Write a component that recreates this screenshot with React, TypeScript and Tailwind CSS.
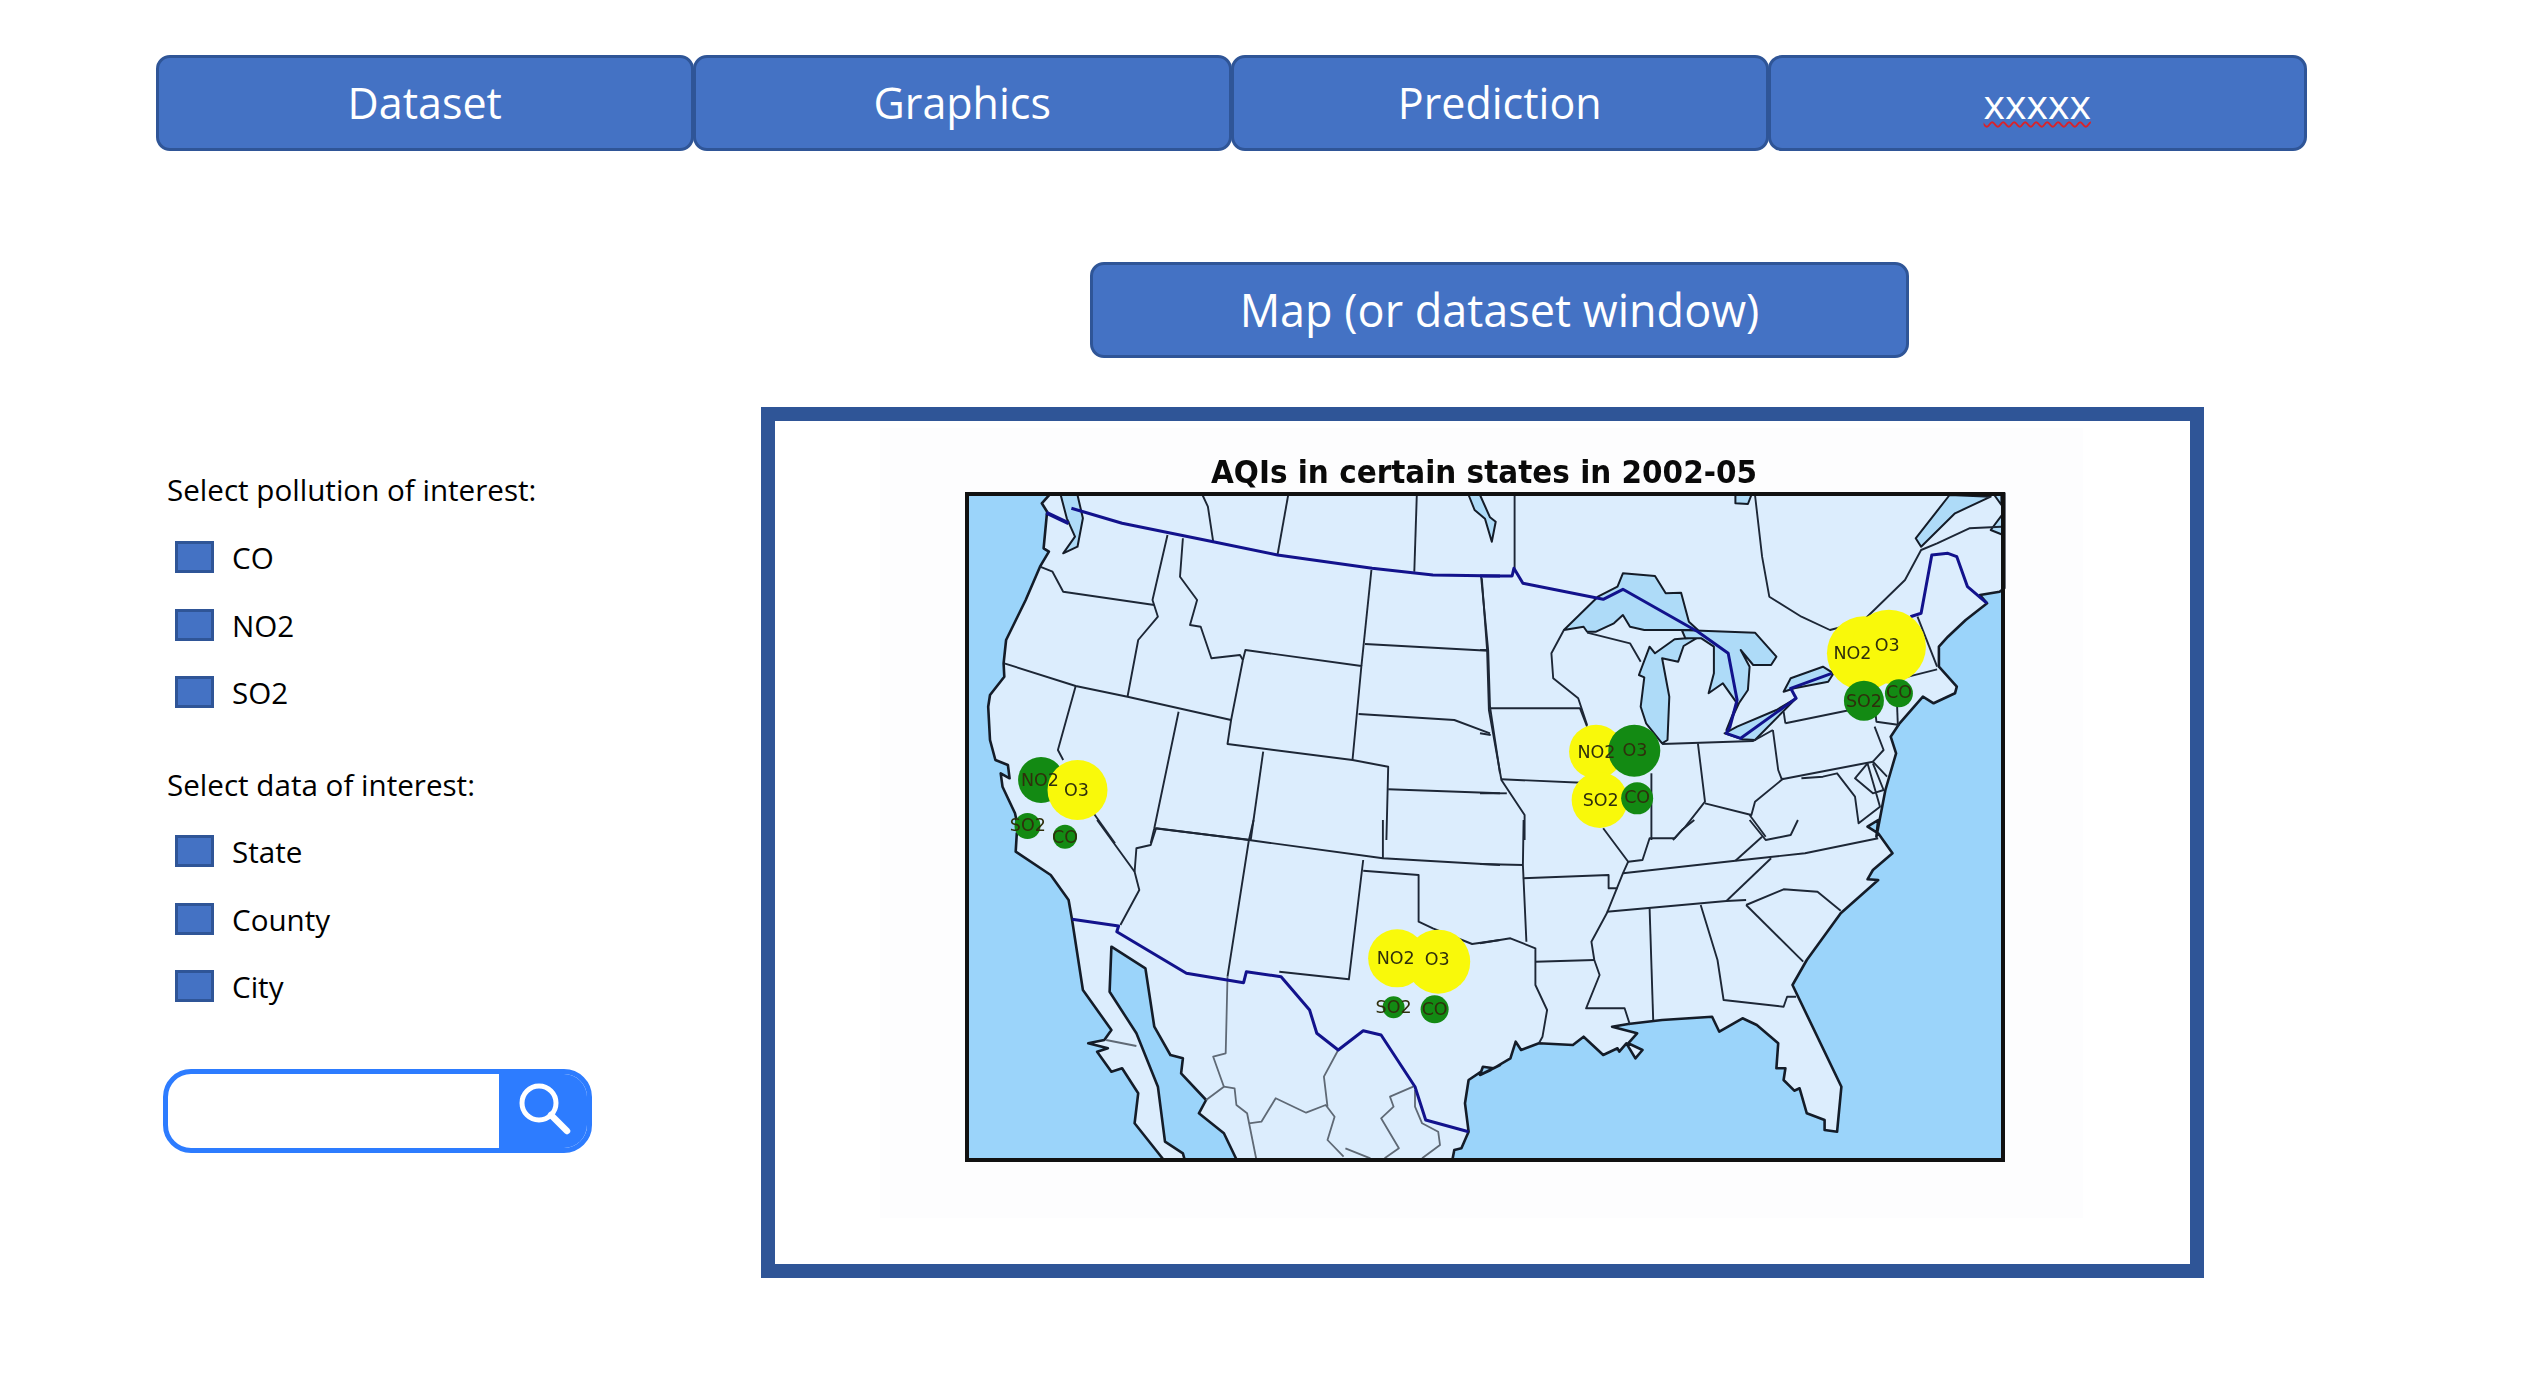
import React from "react";

const ORIGIN: Record<number, [number, number]> = { 1: [940, 440], 2: [1480, 440], 3: [940, 820], 4: [1480, 820] };
const pt = (q: number, s: string) =>
  s
    .trim()
    .split(/\s+/)
    .map((p) => {
      const [x, y] = p.split(",").map(Number);
      return `${(ORIGIN[q][0] + x / 2.8).toFixed(1)},${(ORIGIN[q][1] + y / 3).toFixed(1)}`;
    })
    .join(" ");

const LAND = [
  pt(1, "310,160 285,190 300,215 290,325 305,335 280,380 240,480 185,600 178,670 180,710 140,765 135,800 140,900 155,960 190,975 195,1015 170,1000 175,1040 210,1120 222,1180"),
  pt(3, "215,40 212,95 310,165 360,240 370,300 400,510 480,630 460,660 415,670 470,685 440,695 480,755 510,745 555,820 545,910 625,1018 685,1018 680,1000 630,965 610,800 550,640 475,515 480,380 575,445 600,620 645,705 680,715 675,760 745,840 725,880 795,940 830,1018 1435,1018 1440,990 1460,985 1480,935 1470,850 1480,780 1515,755 1520,740 1550,745 1568,735"),
  pt(4, "0,765 30,750 85,715 100,665 115,690 165,670 260,675 290,650 345,705 385,685 390,695 410,670 435,715 455,690 415,670 440,640 370,620 415,612 510,600 650,590 670,635 735,595 775,615 835,670 830,745 855,745 850,780 880,812 895,805 915,880 965,900 965,930 1000,935 1012,800 875,495 915,420 1010,280 1115,180 1085,178 1100,150 1155,100 1115,40 1085,20 1115,0"),
  pt(2, "1110,1190 1135,1050 1165,940 1150,890 1175,850 1240,770 1270,790 1330,760 1335,740 1285,680 1285,620 1310,590 1360,540 1420,490 1400,465 1455,455 1468,445 1468,160"),
].join(" ");

const WATER: [number, string][] = [
  [1, "338,165 385,165 400,235 385,320 345,340 378,290 355,235"],
  [1, "1480,165 1512,165 1540,232 1556,245 1545,305 1526,236 1497,210"],
  [2, "235,570 330,470 385,440 400,400 490,408 520,460 563,458 585,545 610,570 460,570 420,560 400,525 375,550 325,575 300,575 290,560"],
  [2, "445,705 475,620 490,640 545,598 610,592 570,618 555,665 510,655 530,770 525,900 510,910 465,850 450,800 460,712"],
  [2, "565,570 770,578 830,650 815,675 765,675 730,630 755,680 750,750 725,790 690,870 720,790 680,730 640,760 655,700 655,620 620,595 575,595"],
  [2, "685,880 735,898 770,900 885,775 830,810 720,860"],
  [2, "850,755 870,715 960,680 990,700 975,725 880,745"],
  [2, "1315,165 1220,295 1235,320 1330,220 1430,170"],
  [2, "1440,165 1460,165 1460,195"],
  [2, "1430,270 1465,220 1465,285"],
  [2, "715,165 760,165 750,192 715,190"],
];

const BORDERS: [number, string][] = [
  [1, "280,380 315,395 345,455 600,495"],
  [1, "637,285 595,480 610,530 555,600 525,770"],
  [1, "680,295 672,410 720,480 700,555 730,560 760,655 840,645 848,660"],
  [1, "180,670 380,738 525,770 815,840"],
  [1, "380,738 330,930 345,960"],
  [1, "430,1120 490,1210"],
  [1, "668,815 600,1165 590,1210"],
  [1, "848,660 855,630 1180,678 1155,960"],
  [1, "848,660 815,840 805,912 1155,960 1255,980 1250,1200"],
  [1, "1208,390 1180,678"],
  [1, "1190,612 1535,632"],
  [1, "1172,822 1440,840 1540,880"],
  [1, "1515,410 1535,632 1540,800 1568,1000"],
  [1, "905,935 870,1200"],
  [1, "1255,1048 1568,1060"],
  [1, "735,165 750,200 765,305"],
  [1, "975,165 945,345"],
  [1, "1335,165 1328,395"],
  [1, "600,1165 870,1200"],
  [3, "440,0 545,155 558,210 505,315"],
  [3, "605,25 590,75 550,85 545,155"],
  [3, "605,25 865,60 1240,115 1568,135"],
  [3, "878,0 865,60 805,470"],
  [3, "1185,120 1145,478 950,455"],
  [3, "1185,152 1340,165 1340,305 1380,325 1490,372 1568,360"],
  [3, "1240,0 1240,115"],
  [4, "0,370 85,355 155,385 155,495 188,570 175,650 165,670"],
  [4, "122,0 120,135 130,365"],
  [4, "0,132 120,135"],
  [4, "120,175 360,165 360,205 385,205"],
  [4, "155,425 320,420"],
  [4, "415,125 400,160 355,280 312,365 320,420 335,465 297,565 405,565 420,615"],
  [4, "475,265 485,600"],
  [4, "618,255 665,420 682,540 850,560 860,530 885,530"],
  [4, "355,275 690,243 745,240"],
  [4, "400,160 715,122 910,100 1115,55"],
  [4, "745,255 850,208 945,215 1010,272"],
  [4, "745,255 905,425"],
  [4, "690,243 815,115"],
  [4, "345,25 415,125 455,120 475,55 545,55 565,30 600,0"],
  [4, "715,122 790,50"],
  [4, "755,0 800,60 870,45 890,0"],
  [2, "97,165 97,390"],
  [2, "5,415 20,630 25,810 60,1020 125,1125 125,1200"],
  [2, "0,630 25,630"],
  [2, "25,805 280,805 300,860"],
  [2, "235,570 200,640 205,715 275,775 300,855"],
  [2, "300,578 420,610 450,665"],
  [2, "60,1018 285,1028"],
  [2, "0,880 30,885"],
  [2, "0,1060 75,1060"],
  [2, "480,1000 480,1200"],
  [2, "510,912 765,903 820,870"],
  [2, "610,910 630,1085 575,1160 540,1200"],
  [2, "630,1090 760,1125 770,1085 850,1015"],
  [2, "820,870 835,990 845,1018 1100,965"],
  [2, "855,850 1105,795 1110,845 1175,855"],
  [2, "1105,860 1130,930 1100,965 1140,1010"],
  [2, "855,850 850,815"],
  [2, "1165,720 1170,860"],
  [2, "1225,530 1280,680"],
  [2, "1180,715 1280,688"],
  [2, "770,165 790,350 810,470 900,530 980,570 1070,545 1190,420 1235,330 1280,310 1370,265 1460,260"],
  [2, "755,1125 800,1190"],
  [2, "900,1015 960,1010 1000,1000 1050,1070 1060,1150 1120,1100 1085,970 1050,1015 1100,1060 1130,1050 1100,970"],
];

const GREY: [number, string][] = [
  [3, "805,470 800,700 765,710 795,800"],
  [3, "465,660 550,678"],
  [3, "745,840 795,800 825,805 830,855 860,880 885,1015"],
  [3, "865,910 900,905 940,835 1025,878 1080,855 1105,890 1085,960 1130,1010"],
  [3, "1115,690 1075,770 1085,860"],
  [3, "1325,800 1260,830 1270,860 1235,895 1285,985 1245,1015"],
  [3, "1330,810 1330,860 1350,910 1395,935 1400,975 1350,1015"],
  [3, "1135,985 1205,1015"],
];

const BLUE: [number, string, number][] = [
  [1, "298,218 360,250", 4],
  [1, "368,205 510,250 765,305 945,345 1210,385 1380,405 1568,408", 3],
  [2, "0,408 90,408 95,385 120,430 345,478 400,448 610,575 695,640 720,780 700,860 690,880 730,895 885,775 870,745 985,700", 3],
  [2, "1205,530 1235,520 1265,345 1310,340 1335,350 1365,440 1420,490", 3],
  [3, "370,298 500,318 495,335 690,460 850,488 858,455 955,470 1035,570 1055,640 1115,690 1185,632 1235,645 1330,800 1360,900 1480,935", 3],
];

const YELLOW = "#f9f90a";
const GREEN = "#138a13";
const BUBBLES: [number, number, number, number, string][] = [
  [1, 283, 1020, 23, GREEN],
  [1, 385, 1050, 30, YELLOW],
  [1, 245, 1158, 13, GREEN],
  [3, 350, 50, 12, GREEN],
  [3, 1280, 415, 29, YELLOW],
  [3, 1395, 425, 32, YELLOW],
  [3, 1270, 562, 11, GREEN],
  [3, 1385, 568, 14, GREEN],
  [2, 1075, 640, 37, YELLOW],
  [2, 1145, 620, 37, YELLOW],
  [2, 1075, 782, 20, GREEN],
  [2, 1173, 760, 14, GREEN],
  [2, 325, 935, 27, YELLOW],
  [2, 335, 1080, 28, YELLOW],
  [2, 432, 932, 26, GREEN],
  [2, 440, 1075, 16, GREEN],
];

const LABELS: [number, number, number, string][] = [
  [1, 280, 1020, "NO2"],
  [1, 382, 1050, "O3"],
  [1, 246, 1155, "SO2"],
  [3, 350, 52, "CO"],
  [3, 1276, 413, "NO2"],
  [3, 1392, 418, "O3"],
  [3, 1270, 560, "SO2"],
  [3, 1385, 566, "CO"],
  [2, 1043, 640, "NO2"],
  [2, 1140, 615, "O3"],
  [2, 1075, 782, "SO2"],
  [2, 1173, 755, "CO"],
  [2, 326, 935, "NO2"],
  [2, 434, 930, "O3"],
  [2, 338, 1080, "SO2"],
  [2, 440, 1072, "CO"],
];

function AqiMap() {
  const x = (q: number, v: number) => ORIGIN[q][0] + v / 2.8;
  const y = (q: number, v: number) => ORIGIN[q][1] + v / 3;
  return (
    <svg viewBox="880 428 1203 790" className="w-[1203px] h-[790px] blur-[0.5px] bg-[#fdfdfe]">
      <rect x="967" y="494" width="1036" height="666" fill="#9bd4fa" />
      <polygon points={LAND} fill="#dcedfd" stroke="#141c28" strokeWidth="2.6" strokeLinejoin="round" />
      {WATER.map(([q, p], i) => (
        <polygon key={i} points={pt(q, p)} fill="#aedbf8" stroke="#141c28" strokeWidth="2" strokeLinejoin="round" />
      ))}
      {BORDERS.map(([q, p], i) => (
        <polyline key={i} points={pt(q, p)} fill="none" stroke="#1d2736" strokeWidth="1.9" strokeLinejoin="round" />
      ))}
      {GREY.map(([q, p], i) => (
        <polyline key={i} points={pt(q, p)} fill="none" stroke="#5f6975" strokeWidth="1.8" strokeLinejoin="round" />
      ))}
      {BLUE.map(([q, p, w], i) => (
        <polyline key={i} points={pt(q, p)} fill="none" stroke="#12128c" strokeWidth={w} strokeLinejoin="round" />
      ))}
      {BUBBLES.map(([q, cx, cy, r, c], i) => (
        <circle key={i} cx={x(q, cx)} cy={y(q, cy)} r={r} fill={c} />
      ))}
      {LABELS.map(([q, lx, ly, t], i) => (
        <text
          key={i}
          x={x(q, lx)}
          y={y(q, ly) + 6}
          textAnchor="middle"
          fontSize="17.5"
          fontFamily="'DejaVu Sans', sans-serif"
          fill="#2f2f0c"
        >
          {t}
        </text>
      ))}
      <rect x="967" y="494" width="1036" height="666" fill="none" stroke="#111" strokeWidth="4" />
      <text
        x="1484"
        y="483"
        textAnchor="middle"
        fontSize="32"
        fontWeight="700"
        textLength="546"
        lengthAdjust="spacingAndGlyphs"
        fontFamily="'DejaVu Sans', sans-serif"
        fill="#0a0a0a"
      >
        AQIs in certain states in 2002-05
      </text>
    </svg>
  );
}

function BlueButton({ children, className }: { children: React.ReactNode; className?: string }) {
  return (
    <div
      className={`flex items-center justify-center bg-[#4472c4] border-[3px] border-[#2f5597] rounded-[14px] text-white ${className ?? ""}`}
    >
      {children}
    </div>
  );
}

function NavButton({ children }: { children: React.ReactNode }) {
  return <BlueButton className="w-[538.5px] h-[96px] -mr-[1px] text-[43px] leading-[58px]">{children}</BlueButton>;
}

function Check({ label }: { label: string }) {
  return (
    <div className="flex items-center gap-[18px] pl-[7px] h-[32px]">
      <div className="w-[39px] h-[32px] bg-[#4472c4] border-[3px] border-[#2f5597]" />
      <span className="text-[29.6px] leading-[40px] text-black mt-[2px]">{label}</span>
    </div>
  );
}

export default function App() {
  return (
    <div
      className="w-[2539px] h-[1386px] bg-white overflow-hidden"
      style={{ fontFamily: "'Open Sans', 'Noto Sans', sans-serif" }}
    >
      <div className="pt-[55px] pl-[155.5px]">
        <div className="flex h-[95px]">
          <NavButton>Dataset</NavButton>
          <NavButton>Graphics</NavButton>
          <NavButton>Prediction</NavButton>
          <NavButton>
            <span className="text-[41px] underline decoration-wavy decoration-[#d8232a] decoration-2 underline-offset-[2px]">xxxxx</span>
          </NavButton>
        </div>
      </div>

      <div className="pt-[112px] pl-[1090px]">
        <BlueButton className="w-[819px] h-[96px] text-[45px]">Map (or dataset window)</BlueButton>
      </div>

      <div className="flex pt-[49px]">
        <div className="w-[761px] pl-[167px] pt-[63px] flex flex-col">
          <h2 className="text-[29.6px] leading-[40px] text-black font-normal">Select pollution of interest:</h2>
          <div className="flex flex-col gap-[35.5px] mt-[31px] pl-[1px]">
            <Check label="CO" />
            <Check label="NO2" />
            <Check label="SO2" />
          </div>
          <h2 className="text-[29.6px] leading-[40px] text-black font-normal mt-[57px]">Select data of interest:</h2>
          <div className="flex flex-col gap-[35.5px] mt-[30px] pl-[1px]">
            <Check label="State" />
            <Check label="County" />
            <Check label="City" />
          </div>
          <div className="mt-[67px] -ml-[4px] w-[429px] h-[84px] flex border-[5px] border-[#2d7cff] rounded-[28px] overflow-hidden bg-white">
            <div className="flex-1" />
            <div className="w-[88px] bg-[#2d7cff] flex items-center justify-center">
              <svg viewBox="0 0 60 64" className="w-[60px] h-[64px]" fill="none" stroke="white">
                <circle cx="26" cy="24" r="17" strokeWidth="5" />
                <line x1="38" y1="36" x2="54" y2="52" strokeWidth="6.5" strokeLinecap="round" />
              </svg>
            </div>
          </div>
        </div>

        <div className="w-[1443px] h-[871px] box-border border-[14px] border-[#2f5597] pl-[105px] pt-[7px] bg-white">
          <AqiMap />
        </div>
      </div>
    </div>
  );
}
